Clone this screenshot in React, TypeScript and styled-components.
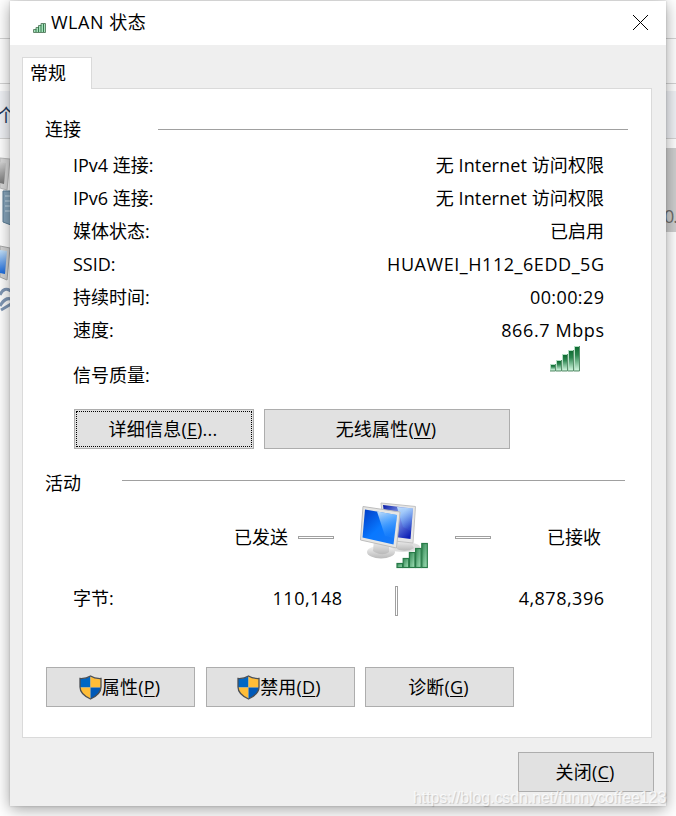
import React from 'react';
import styled, { createGlobalStyle } from 'styled-components';

const GlobalStyle = createGlobalStyle`
  * { box-sizing: border-box; }
  html, body { margin: 0; padding: 0; overflow: hidden; background: #fff; }
  body {
    font-family: 'Open Sans', 'Noto Sans CJK SC', sans-serif;
    font-size: 18px;
    font-weight: 400;
    color: #000;
  }
`;

const Desktop = styled.div`
  position: relative;
  width: 676px;
  height: 816px;
  overflow: hidden;
  background: #fff;
`;

const Backdrop = styled.div`
  position: absolute;
  inset: 0;
  display: flex;
  flex-direction: column;
`;

const Band = styled.div<{ $h: number; $bg: string; $line?: boolean }>`
  height: ${(p) => p.$h}px;
  flex: none;
  background: ${(p) => p.$bg};
  border-bottom: ${(p) => (p.$line ? '1px solid #d4d4d4' : 'none')};
`;

const ToolBand = styled(Band)`
  display: flex;
  align-items: center;
  color: #1e395b;
`;

const ToolText = styled.span`
  margin: -2px 0 0 -3px;
`;

const AdapterList = styled.div`
  display: flex;
  justify-content: space-between;
  padding-top: 9px;
`;

const SelectedTile = styled.div`
  width: 12px;
  height: 84px;
  padding-top: 55px;
  background: #cfcfcf;
  color: #6d6d6d;
  letter-spacing: -1px;
  line-height: 26px;
  white-space: nowrap;
`;

const Dialog = styled.main`
  position: absolute;
  left: 10px;
  top: 1px;
  width: 656px;
  height: 805px;
  display: flex;
  flex-direction: column;
  background: #efefef;
  box-shadow: 0 3px 15px rgba(0, 0, 0, 0.38), 0 0 2px rgba(0, 0, 0, 0.18);
`;

const TitleBar = styled.header`
  display: flex;
  align-items: center;
  height: 44px;
  flex: none;
  padding: 0 17px 2px 22px;
  background: #fff;
`;

const TitleText = styled.h1`
  flex: 1;
  margin: 0 0 0 6px;
  font-size: 18px;
  font-weight: inherit;
  letter-spacing: 0.5px;
  line-height: 24px;
`;

const CloseIcon = styled.svg`
  display: block;
`;

const TitleSignal = styled.span`
  display: flex;
  margin: 11px -1px 0 1px;
`;

const Tab = styled.div`
  width: 70px;
  height: 32px;
  flex: none;
  margin: 12px 0 -1px 12px;
  padding-left: 7px;
  border: 1px solid #dadada;
  border-bottom: 0;
  background: #fff;
  line-height: 30px;
  z-index: 1;
`;

const Panel = styled.section`
  width: 630px;
  height: 650px;
  flex: none;
  margin-left: 12px;
  padding: 28px 22px 0;
  border: 1px solid #dadada;
  background: #fff;
`;

const SectionHead = styled.div<{ $gap: number; $lift: number; $right: number; $top: number }>`
  display: flex;
  align-items: center;
  gap: ${(p) => p.$gap}px;
  height: 24px;
  margin-top: ${(p) => p.$top}px;
  margin-right: ${(p) => p.$right}px;
  line-height: 24px;
  &::after {
    content: '';
    flex: 1;
    height: 1px;
    margin-bottom: ${(p) => p.$lift}px;
    background: #a0a0a0;
  }
`;

const Rows = styled.div`
  padding: 7px 25px 0 28px;
`;

const Row = styled.div<{ $h?: number }>`
  display: flex;
  align-items: center;
  justify-content: space-between;
  height: ${(p) => p.$h ?? 33}px;
`;

const Text = styled.span<{ $track?: number }>`
  letter-spacing: ${(p) => p.$track ?? 0}px;
  margin-right: ${(p) => -(p.$track ?? 0)}px;
  line-height: 24px;
  white-space: nowrap;
`;

const SignalSlot = styled.span`
  align-self: flex-start;
  display: flex;
  margin: -1px 24px 0 0;
`;

const Buttons = styled.div<{ $top: number; $left: number; $gap: number }>`
  display: flex;
  gap: ${(p) => p.$gap}px;
  margin: ${(p) => p.$top}px 0 0 ${(p) => p.$left}px;
`;

const Button = styled.button<{ $w: number }>`
  display: flex;
  align-items: center;
  justify-content: center;
  width: ${(p) => p.$w}px;
  height: 40px;
  flex: none;
  padding: 0 2px 0 0;
  border: 1px solid #adadad;
  background: #e1e1e1;
  color: #000;
  font: inherit;
  letter-spacing: 0.2px;
  line-height: 24px;
  white-space: nowrap;
`;

const FocusedButton = styled(Button)`
  outline: 1px dotted #000;
  outline-offset: -3px;
`;

const Key = styled.span`
  text-decoration: underline;
  text-decoration-thickness: 1px;
  text-underline-offset: 2px;
`;

const Transfer = styled.div`
  display: grid;
  grid-template-columns: 53px 36px 70px 36px 54px;
  column-gap: 10px;
  align-items: center;
  height: 84px;
  padding-left: 189px;
  & > :nth-child(2) { margin-left: 1px; }
  & > :nth-child(3) { margin: -2px 0 0 17px; }
  & > :nth-child(4) { margin-left: 32px; }
  & > :nth-child(5) { margin-left: 78px; }
`;

const Dash = styled.i`
  width: 36px;
  height: 3px;
  margin-top: 1px;
  border: 1px solid #a0a0a0;
  background: #fff;
`;

const Bytes = styled.div`
  display: grid;
  grid-template-columns: 100px 169px 56px 206px;
  align-items: center;
  height: 37px;
  padding: 0 0 2px 28px;
`;

const Amount = styled(Text)`
  justify-self: end;
`;

const Divider = styled.i`
  width: 3px;
  height: 30px;
  margin-top: 7px;
  justify-self: end;
  border: 1px solid #a0a0a0;
  background: #fff;
`;

const Footer = styled.footer`
  display: flex;
  justify-content: flex-end;
  padding: 14px 12px 0 0;
`;

const Watermark = styled.div`
  position: absolute;
  left: 413px;
  top: 788px;
  font-family: 'Liberation Sans', sans-serif;
  font-size: 16px;
  letter-spacing: -0.1px;
  line-height: 20px;
  color: rgba(255, 255, 255, 0.75);
  text-shadow: 1px 1px 1px rgba(0, 0, 0, 0.18);
  white-space: nowrap;
`;

const Shield = () => (
  <svg width="23" height="25" viewBox="0 0 23 25">
    <defs>
      <clipPath id="shield-shape">
        <path d="M11.500 1C8.500 3 5 3.700 1 3.500V12c0 6 5 9.500 10.500 12C17 21.500 22 18 22 12V3.500C18 3.700 14.500 3 11.500 1Z" />
      </clipPath>
    </defs>
    <g clipPath="url(#shield-shape)">
      <path fill="#0067c5" d="M0 0h11.500v12.500H0z" />
      <path fill="#ffbd38" d="M11.500 0H23v12.500H11.500zM0 12.500h11.500V25H0z" />
      <path fill="#0059b8" d="M11.500 12.500H23V25H11.500z" />
    </g>
    <path
      d="M11.500 1C8.500 3 5 3.700 1 3.500V12c0 6 5 9.500 10.500 12C17 21.500 22 18 22 12V3.500C18 3.700 14.500 3 11.500 1Z"
      fill="none"
      stroke="#4c4f54"
      strokeWidth="1.300"
    />
  </svg>
);

const SignalBars = () => (
  <svg width="30" height="27" viewBox="0 0 30 27">
    <defs>
      <linearGradient id="bar-fill" x1="0" y1="0" x2="0" y2="1">
        <stop offset="0" stopColor="#0d6b31" />
        <stop offset="0.35" stopColor="#2c8650" />
        <stop offset="1" stopColor="#cdf5dc" />
      </linearGradient>
    </defs>
    {[7, 11, 17, 21, 25].map((h, i) => (
      <g key={h}>
        <rect x={i * 6} y={26 - h} width="6" height={h} fill="#b4dfc4" />
        <rect x={i * 6 + 1} y={27 - h} width="4" height={h - 2} fill="url(#bar-fill)" />
        <path d={`M${i * 6 + 5.5} ${26 - h}V26H${i * 6}`} fill="none" stroke="#5a8f6c" />
      </g>
    ))}
  </svg>
);

const TitleBars = () => (
  <svg width="13" height="11" viewBox="0 0 13 11">
    <path d="M.5 10.500V7.500H3V5.500H5.500V3.500H8V1.500H12.500V10.500Z" fill="#a8e0bd" stroke="#63876c" />
    <path d="M3 7v3M5.500 5v5M8 3v7M10.500 2v8" fill="none" stroke="#347c4d" />
  </svg>
);

const Computers = () => (
  <svg width="70" height="68" viewBox="0 0 70 68">
    <defs>
      <linearGradient id="screen-front" x1="0" y1="0" x2="1" y2="1">
        <stop offset="0" stopColor="#003bc4" />
        <stop offset="0.500" stopColor="#0878ff" />
        <stop offset="1" stopColor="#1a78f5" />
      </linearGradient>
      <linearGradient id="screen-back" x1="0" y1="0" x2="0.800" y2="1">
        <stop offset="0" stopColor="#0519a6" />
        <stop offset="0.450" stopColor="#90a8ef" />
        <stop offset="1" stopColor="#0b1db5" />
      </linearGradient>
      <linearGradient id="glare" x1="0" y1="0" x2="0.300" y2="1">
        <stop offset="0" stopColor="#d3edff" stopOpacity="0.950" />
        <stop offset="1" stopColor="#4ba7ff" stopOpacity="0.100" />
      </linearGradient>
      <linearGradient id="stand" x1="0" y1="0" x2="0" y2="1">
        <stop offset="0" stopColor="#f6f6f6" />
        <stop offset="1" stopColor="#b9b9b9" />
      </linearGradient>
      <linearGradient id="badge-fill" x1="0" y1="0" x2="1" y2="1">
        <stop offset="0" stopColor="#2f8552" />
        <stop offset="1" stopColor="#a5e4bb" />
      </linearGradient>
    </defs>
    <ellipse cx="43" cy="45" rx="17" ry="5" fill="#dedede" />
    <path d="M38 37 49 38 54 46C48 50 41 49 37 47Z" fill="url(#stand)" />
    <path d="M21 1 55.500 4.500 53 41 25 38Z" fill="#e5e5e5" stroke="#c3c3c3" />
    <path d="M23 3 53 6.500 50.500 37 27 34Z" fill="url(#screen-back)" />
    <path d="M37 5 53 6.500 51 29 43 25Z" fill="url(#glare)" />
    <ellipse cx="21" cy="50" rx="14" ry="6.500" fill="url(#stand)" />
    <path d="M14 37 29 39 29 50C24 54 17 52 13 49Z" fill="url(#stand)" />
    <path d="M3 4.500 40 10 36.500 46 0.500 38Z" fill="#e6e6e4" stroke="#bdbdbd" />
    <path d="M5 7.500 37 13 33.500 42.500 2.500 35.500Z" fill="url(#screen-front)" />
    <path d="M17 9.500 37 13 34.500 36 25 34Z" fill="url(#glare)" />
    {[5, 10, 16, 20, 25].map((h, i) => (
      <rect
        key={h}
        x={37 + i * 6.2}
        y={66.5 - h}
        width="5.500"
        height={h - 1}
        fill="url(#badge-fill)"
        stroke="#287b48"
        strokeWidth="1.200"
      />
    ))}
  </svg>
);

const AdapterIcons = () => (
  <svg width="11" height="168" viewBox="0 0 11 168">
    <defs>
      <linearGradient id="grey-screen" x1="0" y1="0" x2="0" y2="1">
        <stop offset="0" stopColor="#d4d4d4" />
        <stop offset="1" stopColor="#777" />
      </linearGradient>
      <linearGradient id="blue-screen" x1="0" y1="0" x2="0" y2="1">
        <stop offset="0" stopColor="#c5e2fb" />
        <stop offset="1" stopColor="#1868dc" />
      </linearGradient>
    </defs>
    <path d="M0 10 10 11 7 42 0 40Z" fill="#d8d8d8" stroke="#bbb" />
    <path d="M0 14 6 15 4 36 0 35Z" fill="url(#grey-screen)" />
    <path d="M3 43H11V77L3 74Z" fill="#86a4bb" stroke="#5b7d96" />
    <path d="M5 48h6M5 53h6M5 58h6M5 63h6" stroke="#c9dce8" />
    <path d="M0 98 10 100 7 132 0 129Z" fill="#d5d5d5" stroke="#aaa" />
    <path d="M0 102 7 103 5 126 0 125Z" fill="url(#blue-screen)" />
    <path d="M0 147Q4 138 11 143M0 158Q5 149 11 151M1 162 11 156" fill="none" stroke="#8097b5" strokeWidth="3" />
  </svg>
);

const DETAILS = [
  { label: 'IPv4 连接:', value: '无 Internet 访问权限', track: 0.1 },
  { label: 'IPv6 连接:', value: '无 Internet 访问权限', track: 0.1 },
  { label: '媒体状态:', value: '已启用', track: 0 },
  { label: 'SSID:', value: 'HUAWEI_H112_6EDD_5G', track: 0.55 },
  { label: '持续时间:', value: '00:00:29', track: 0.4 },
  { label: '速度:', value: '866.7 Mbps', track: 0.6 },
];

export default function App() {
  return (
    <Desktop>
      <GlobalStyle />
      <Backdrop>
        <Band $h={39} $bg="#fff" $line />
        <Band $h={45} $bg="#fff" $line />
        <Band $h={7} $bg="#fff" />
        <ToolBand $h={48} $bg="#f0f2f6" $line>
          <ToolText>个</ToolText>
        </ToolBand>
        <AdapterList>
          <AdapterIcons />
          <SelectedTile>0.</SelectedTile>
        </AdapterList>
      </Backdrop>
      <Dialog>
        <TitleBar>
          <TitleSignal>
            <TitleBars />
          </TitleSignal>
          <TitleText>WLAN 状态</TitleText>
          <CloseIcon width="17" height="17" viewBox="0 0 17 17">
            <path d="M1 1 16 16M16 1 1 16" stroke="#000" strokeWidth="1" />
          </CloseIcon>
        </TitleBar>
        <Tab>常规</Tab>
        <Panel>
          <SectionHead $gap={77} $lift={-1} $right={1} $top={0}>连接</SectionHead>
          <Rows>
            {DETAILS.map((d) => (
              <Row key={d.label}>
                <Text>{d.label}</Text>
                <Text $track={d.track}>{d.value}</Text>
              </Row>
            ))}
            <Row $h={57}>
              <Text>信号质量:</Text>
              <SignalSlot>
                <SignalBars />
              </SignalSlot>
            </Row>
          </Rows>
          <Buttons $top={6} $left={29} $gap={10}>
            <FocusedButton $w={180}>详细信息(<Key>E</Key>)...</FocusedButton>
            <Button $w={246}>无线属性(<Key>W</Key>)</Button>
          </Buttons>
          <SectionHead $gap={41} $lift={6} $right={4} $top={22}>活动</SectionHead>
          <Transfer>
            <Text>已发送</Text>
            <Dash />
            <Computers />
            <Dash />
            <Text>已接收</Text>
          </Transfer>
          <Bytes>
            <Text>字节:</Text>
            <Amount $track={0.5}>110,148</Amount>
            <Divider />
            <Amount $track={0.5}>4,878,396</Amount>
          </Bytes>
          <Buttons $top={51} $left={1} $gap={10.5}>
            <Button $w={149}><Shield />属性(<Key>P</Key>)</Button>
            <Button $w={149}><Shield />禁用(<Key>D</Key>)</Button>
            <Button $w={149}>诊断(<Key>G</Key>)</Button>
          </Buttons>
        </Panel>
        <Footer>
          <Button $w={136}>关闭(<Key>C</Key>)</Button>
        </Footer>
      </Dialog>
      <Watermark>https://blog.csdn.net/funnycoffee123</Watermark>
    </Desktop>
  );
}
